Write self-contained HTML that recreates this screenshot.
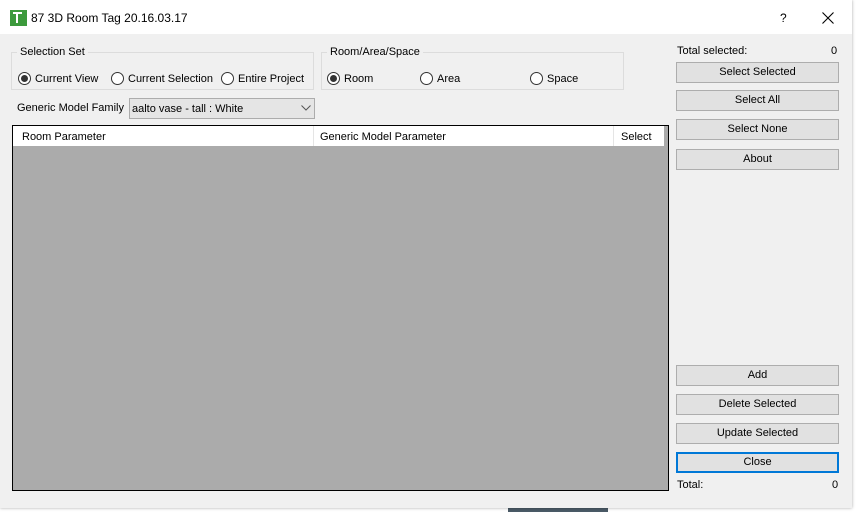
<!DOCTYPE html>
<html><head><style>
*{box-sizing:border-box;margin:0;padding:0}
body{width:856px;height:512px;background:#fff;font-family:"Liberation Sans",sans-serif;font-size:11px;color:#000;position:relative;overflow:hidden}
.a{position:absolute}
.dlg{left:0;top:0;width:852px;height:508px;background:#f0f0f0;box-shadow:0 0 3px rgba(0,0,0,.35)}
.title{left:0;top:0;width:852px;height:34px;background:#fff}
.grp{border:1px solid #dcdcdc}
.lbl{background:#f0f0f0;padding:0 3px;white-space:nowrap}
.rad{width:13px;height:13px;border:1px solid #333;border-radius:50%;background:#fff}
.rad.on::after{content:"";position:absolute;left:2px;top:2px;width:7px;height:7px;border-radius:50%;background:#333}
.btn{left:676px;width:163px;height:21px;background:#e1e1e1;border:1px solid #adadad;text-align:center;line-height:19px}
.t{white-space:nowrap}
</style></head><body>
<div class="a" style="left:508px;top:508px;width:100px;height:4px;background:#4a5a66"></div>
<div class="a dlg">
<div class="a title">
<div class="a" style="left:10px;top:10px;width:17px;height:16px;background:#3c9a3c"></div>
<div class="a" style="left:13px;top:12px;width:9px;height:2px;background:#fff"></div>
<div class="a" style="left:16px;top:12px;width:2px;height:11px;background:#fff"></div>
<div class="a t" style="left:31px;top:11px;font-size:12px">87 3D Room Tag 20.16.03.17</div>
<div class="a t" style="left:780px;top:11px;font-size:12px">?</div>
<svg class="a" style="left:822px;top:12px" width="12" height="12"><path d="M0.5 0.5L11.5 11.5M11.5 0.5L0.5 11.5" stroke="#000" stroke-width="1.1"/></svg>
</div>
<div class="a grp" style="left:11px;top:52px;width:303px;height:38px"></div>
<div class="a lbl" style="left:17px;top:46px">Selection Set</div>
<div class="a rad on" style="left:18px;top:72px"></div><div class="a t" style="left:35px;top:73px">Current View</div>
<div class="a rad" style="left:111px;top:72px"></div><div class="a t" style="left:128px;top:73px">Current Selection</div>
<div class="a rad" style="left:221px;top:72px"></div><div class="a t" style="left:238px;top:73px">Entire Project</div>
<div class="a grp" style="left:321px;top:52px;width:303px;height:38px"></div>
<div class="a lbl" style="left:327px;top:46px">Room/Area/Space</div>
<div class="a rad on" style="left:327px;top:72px"></div><div class="a t" style="left:344px;top:73px">Room</div>
<div class="a rad" style="left:420px;top:72px"></div><div class="a t" style="left:437px;top:73px">Area</div>
<div class="a rad" style="left:530px;top:72px"></div><div class="a t" style="left:547px;top:73px">Space</div>
<div class="a t" style="left:17px;top:102px">Generic Model Family</div>
<div class="a" style="left:129px;top:98px;width:186px;height:21px;background:#e5e5e5;border:1px solid #acacac"></div>
<div class="a t" style="left:132px;top:103px">aalto vase - tall : White</div>
<svg class="a" style="left:301px;top:105px" width="10" height="6"><path d="M0.5 0.5L5 5L9.5 0.5" stroke="#555" fill="none"/></svg>
<div class="a" style="left:12px;top:125px;width:657px;height:366px;background:#ababab;border:1px solid #000"></div>
<div class="a" style="left:13px;top:126px;width:651px;height:20px;background:#fff"></div>
<div class="a" style="left:313px;top:126px;width:1px;height:20px;background:#e5e5e5"></div>
<div class="a" style="left:613px;top:126px;width:1px;height:20px;background:#e5e5e5"></div>
<div class="a t" style="left:22px;top:131px">Room Parameter</div>
<div class="a t" style="left:320px;top:131px">Generic Model Parameter</div>
<div class="a t" style="left:621px;top:131px">Select</div>
<div class="a t" style="left:677px;top:45px">Total selected:</div>
<div class="a t" style="left:831px;top:45px">0</div>
<div class="a btn" style="top:62px">Select Selected</div>
<div class="a btn" style="top:90px">Select All</div>
<div class="a btn" style="top:119px">Select None</div>
<div class="a btn" style="top:149px">About</div>
<div class="a btn" style="top:365px">Add</div>
<div class="a btn" style="top:394px">Delete Selected</div>
<div class="a btn" style="top:423px">Update Selected</div>
<div class="a btn" style="top:452px;border:2px solid #0078d7;line-height:17px">Close</div>
<div class="a t" style="left:677px;top:479px">Total:</div>
<div class="a t" style="left:832px;top:479px">0</div>
</div>
</body></html>
